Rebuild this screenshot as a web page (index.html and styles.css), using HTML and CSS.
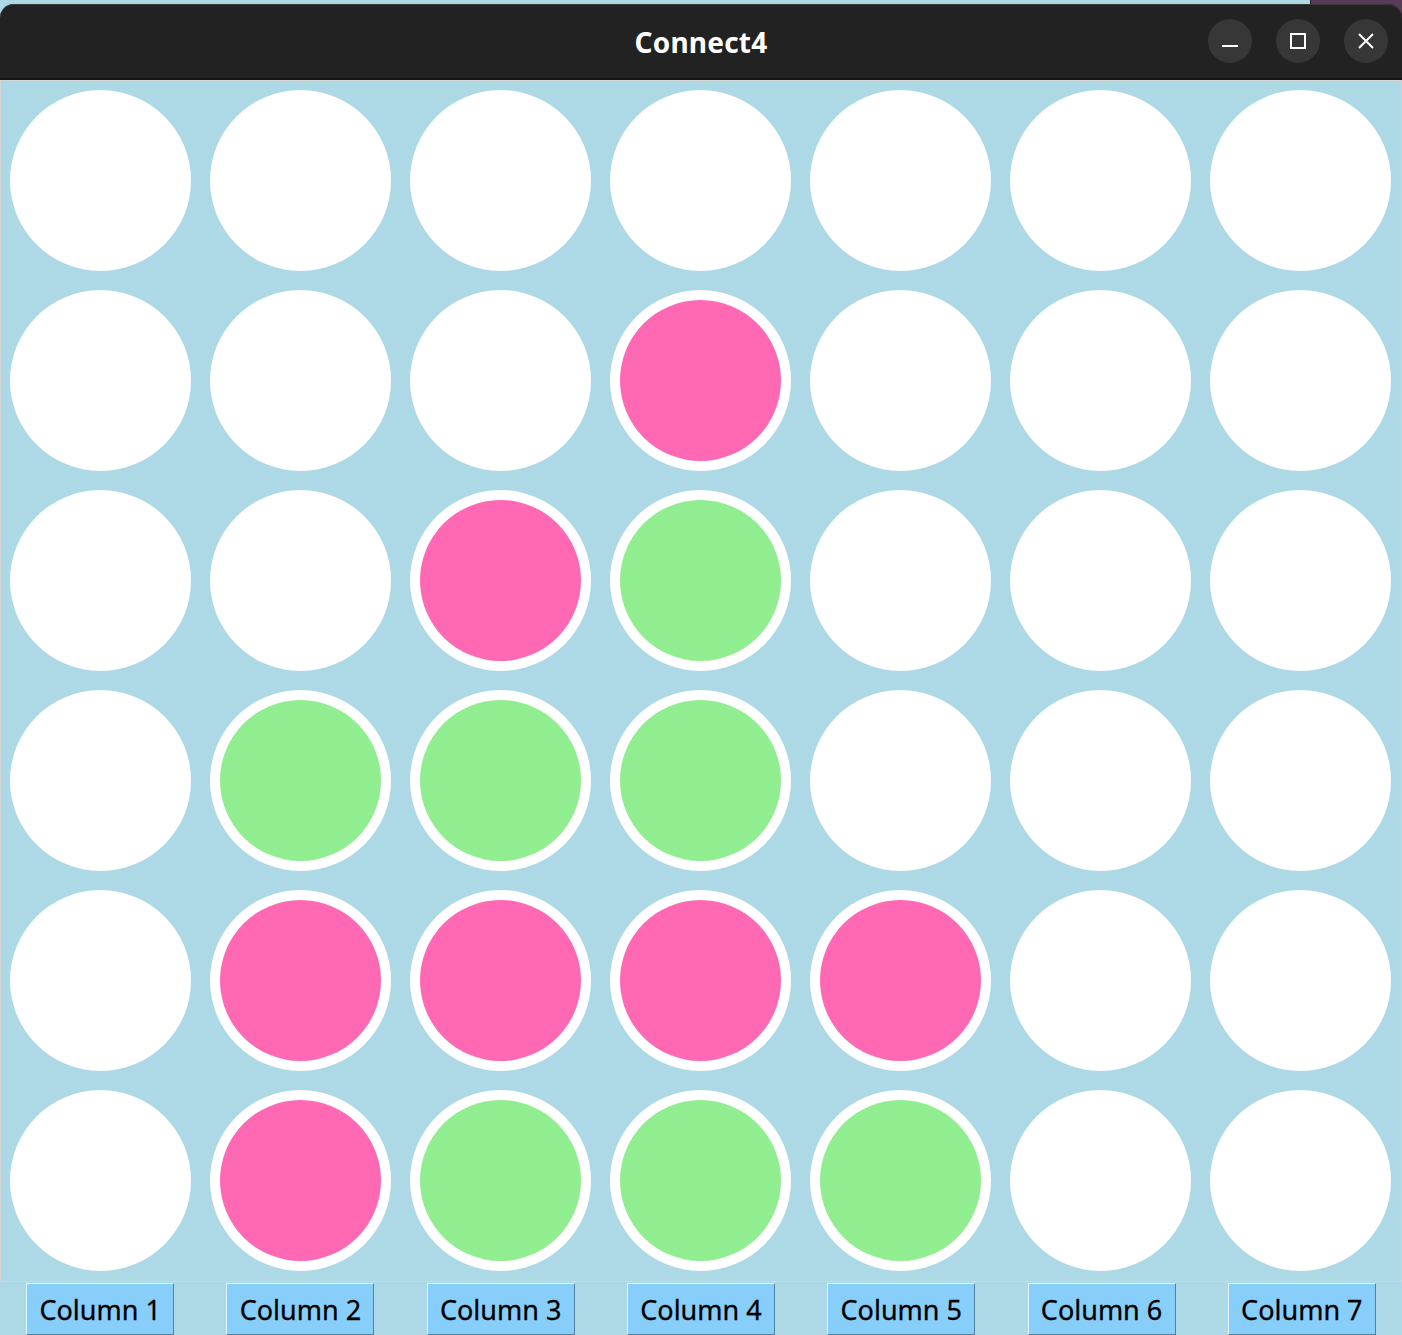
FILE: index.html
```html
<!DOCTYPE html>
<html>
<head>
<meta charset="utf-8">
<title>Connect4</title>
<link rel="stylesheet" href="styles.css">
</head>
<body>
<div class="window">
  <div class="titlebar">
    <div class="spacer"></div>
    <div class="title">Connect4</div>
    <div class="controls">
      <div class="ctrl"><svg width="16" height="16" viewBox="0 0 16 16"><line x1="0" y1="13" x2="16" y2="13" stroke="#fff" stroke-width="2"/></svg></div>
      <div class="ctrl"><svg width="16" height="16" viewBox="0 0 16 16"><rect x="1" y="1" width="14" height="14" fill="none" stroke="#fff" stroke-width="2"/></svg></div>
      <div class="ctrl"><svg width="16" height="16" viewBox="0 0 16 16"><path d="M1 1 L15 15 M15 1 L1 15" stroke="#fff" stroke-width="2" fill="none"/></svg></div>
    </div>
  </div>
  <div class="board">
    <div class="hole"></div><div class="hole"></div><div class="hole"></div><div class="hole"></div><div class="hole"></div><div class="hole"></div><div class="hole"></div>
    <div class="hole"></div><div class="hole"></div><div class="hole"></div><div class="hole"><div class="piece pink"></div></div><div class="hole"></div><div class="hole"></div><div class="hole"></div>
    <div class="hole"></div><div class="hole"></div><div class="hole"><div class="piece pink"></div></div><div class="hole"><div class="piece green"></div></div><div class="hole"></div><div class="hole"></div><div class="hole"></div>
    <div class="hole"></div><div class="hole"><div class="piece green"></div></div><div class="hole"><div class="piece green"></div></div><div class="hole"><div class="piece green"></div></div><div class="hole"></div><div class="hole"></div><div class="hole"></div>
    <div class="hole"></div><div class="hole"><div class="piece pink"></div></div><div class="hole"><div class="piece pink"></div></div><div class="hole"><div class="piece pink"></div></div><div class="hole"><div class="piece pink"></div></div><div class="hole"></div><div class="hole"></div>
    <div class="hole"></div><div class="hole"><div class="piece pink"></div></div><div class="hole"><div class="piece green"></div></div><div class="hole"><div class="piece green"></div></div><div class="hole"><div class="piece green"></div></div><div class="hole"></div><div class="hole"></div>
  </div>
  <div class="buttons">
    <div class="cell"><button class="colbtn">Column 1</button></div>
    <div class="cell"><button class="colbtn">Column 2</button></div>
    <div class="cell"><button class="colbtn">Column 3</button></div>
    <div class="cell"><button class="colbtn">Column 4</button></div>
    <div class="cell"><button class="colbtn">Column 5</button></div>
    <div class="cell"><button class="colbtn">Column 6</button></div>
    <div class="cell"><button class="colbtn">Column 7</button></div>
  </div>
</div>
</body>
</html>
```

FILE: styles.css
```css
html, body {
  margin: 0;
  padding: 0;
}
body {
  width: 1402px;
  height: 1335px;
  overflow: hidden;
  background: linear-gradient(to right, #add8e6 0, #add8e6 1310px, #1e1a20 1310px, #1e1a20 1311px, #573b58 1311px);
  font-family: "Noto Sans", "DejaVu Sans", sans-serif;
}
.window {
  padding-top: 4px;
}
.titlebar {
  height: 74px;
  background: #222222;
  border-radius: 14px 14px 0 0;
  border-bottom: 2px solid #161616;
  box-shadow: inset 0 1px 0 #3a3a3a;
  display: grid;
  grid-template-columns: 1fr auto 1fr;
  align-items: center;
}
.title {
  color: #ffffff;
  font-weight: 700;
  font-size: 28px;
  letter-spacing: 0.2px;
  padding-top: 2px;
}
.controls {
  justify-self: end;
  display: flex;
  gap: 24px;
  padding-right: 14px;
}
.ctrl {
  width: 44px;
  height: 44px;
  border-radius: 50%;
  background: #373737;
  display: flex;
  align-items: center;
  justify-content: center;
}
.ctrl svg {
  display: block;
}
.board {
  background: #add8e6;
  border: 1px solid #d4d4d4;
  display: grid;
  grid-template-columns: repeat(7, 200px);
  grid-template-rows: repeat(6, 200px);
}
.hole {
  width: 181px;
  height: 181px;
  margin: 9px 0 0 9px;
  border-radius: 50%;
  background: #ffffff;
  display: flex;
  align-items: center;
  justify-content: center;
}
.piece {
  width: 161px;
  height: 161px;
  border-radius: 50%;
}
.pink {
  background: #ff69b4;
}
.green {
  background: #90ee90;
}
.buttons {
  background: #add8e6;
  display: grid;
  grid-template-columns: repeat(7, 1fr);
  padding-top: 1px;
}
.cell {
  display: flex;
  justify-content: center;
}
.colbtn {
  width: 148px;
  height: 52px;
  margin: 0;
  padding: 0;
  background: #87cefa;
  border: 1px solid;
  border-color: #e2f6ff #4f82a3 #4f82a3 #e2f6ff;
  color: #000000;
  font-family: "Noto Sans", "DejaVu Sans", sans-serif;
  font-size: 27px;
  line-height: 1;
  -webkit-text-stroke: 0.3px #000;
}
```
